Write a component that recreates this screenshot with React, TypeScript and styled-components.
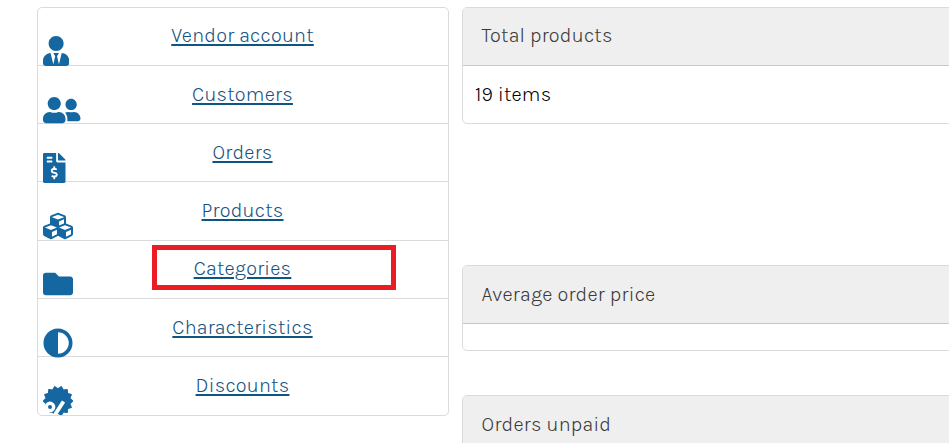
import React from "react";
import styled, { createGlobalStyle } from "styled-components";
import {
  FaUserTie,
  FaUserFriends,
  FaFileInvoiceDollar,
  FaCubes,
  FaFolder,
  FaAdjust,
} from "react-icons/fa";

const GlobalStyle = createGlobalStyle`
  * { box-sizing: border-box; }
  html, body { margin: 0; background: #fff; overflow: hidden; }
  body {
    font-family: Karla, Roboto, "Liberation Sans", sans-serif;
    font-size: 20px;
    font-weight: 360;
    letter-spacing: 0.25px;
  }
`;

const Page = styled.main`
  display: grid;
  grid-template-columns: 412px 520px;
  column-gap: 13px;
  align-items: start;
  width: 949px;
  height: 443px;
  padding: 7px 0 0 37px;
  overflow: hidden;
`;

const Menu = styled.nav`
  display: grid;
  grid-template-rows: 58px 58px 58px 59px 58px 58px 58px;
  height: 409px;
  border: 1px solid #dbdbdb;
  border-radius: 5px;
  overflow: hidden;
`;

const MenuRow = styled.div<{ $shift: number }>`
  display: grid;
  grid-template: 100% / 100%;
  padding-top: ${(p) => p.$shift}px;
  border-bottom: 1px solid #dbdbdb;
  &:last-child { border-bottom: 0; }
`;

const IconSlot = styled.span<{ $width: number }>`
  grid-area: 1 / 1;
  height: 30px;
  margin: 28px 0 0 5px;
  justify-self: start;
  color: #1467a1;
  z-index: 1;
  svg { display: block; height: 30px; width: ${(p) => p.$width}px; }
`;

const LabelSlot = styled.div`
  grid-area: 1 / 1;
  display: flex;
  justify-content: center;
  padding-top: 16px;
  padding-right: 1px;
  line-height: 24px;
`;

const MenuLink = styled.a`
  color: #16527f;
  text-decoration: underline;
  text-decoration-color: #0d5583;
  text-decoration-thickness: 2px;
  text-underline-offset: 2px;
`;

const Highlight = styled.div`
  position: absolute;
  left: 152px;
  top: 245px;
  width: 244px;
  height: 45px;
  border: 5px solid #ec1c24;
`;

const Stats = styled.section`
  display: flex;
  flex-direction: column;
`;

const Card = styled.article<{ $height: number; $gap: number }>`
  height: ${(p) => p.$height}px;
  margin-bottom: ${(p) => p.$gap}px;
  flex: none;
  border: 1px solid #dbdbdb;
  border-radius: 5px;
  overflow: hidden;
`;

const CardHead = styled.header<{ $shift?: number }>`
  height: 58px;
  padding: ${(p) => 16 + (p.$shift ?? 0)}px 0 0 18.6px;
  line-height: 24px;
  background: #efefef;
  border-bottom: 1px solid #c8c8c8;
  color: #3a3a3a;
`;

const CardBody = styled.div`
  padding: 17px 0 0 12px;
  line-height: 24px;
  color: #000;
`;

/* Serrated seal with a percent sign knocked out of it. */
function DiscountIcon() {
  const teeth = 14;
  const points = Array.from({ length: teeth * 2 }, (_, i) => {
    const r = i % 2 ? 14.6 : 12;
    const a = (Math.PI * i) / teeth - Math.PI / 2;
    return `${15 + r * Math.cos(a)},${15 + r * Math.sin(a)}`;
  }).join(" ");
  return (
    <svg viewBox="0 0 30 30">
      <polygon points={points} fill="currentColor" stroke="currentColor" strokeWidth="1.4" strokeLinejoin="round" />
      <circle cx="7" cy="21" r="3.7" fill="currentColor" stroke="#fff" strokeWidth="3.4" />
      <path d="M0 20 L2.5 20 L6 25 L8 30 H0Z" fill="#fff" />
      <path d="M20.5 15.5 L10.5 31" stroke="#fff" strokeWidth="3.8" />
    </svg>
  );
}

const items = [
  { label: "Vendor account", icon: <FaUserTie />, width: 26.25, shift: 0 },
  { label: "Customers", icon: <FaUserFriends />, width: 37.5, shift: 1 },
  { label: "Orders", icon: <FaFileInvoiceDollar />, width: 22.5, shift: 1 },
  { label: "Products", icon: <FaCubes />, width: 30, shift: 1 },
  { label: "Categories", icon: <FaFolder />, width: 30, shift: 0 },
  { label: "Characteristics", icon: <FaAdjust />, width: 30, shift: 1 },
  { label: "Discounts", icon: <DiscountIcon />, width: 30, shift: 1 },
];

export default function App() {
  return (
    <>
      <GlobalStyle />
      <Page>
        <Menu>
          {items.map((item) => (
            <MenuRow key={item.label} $shift={item.shift}>
              <IconSlot $width={item.width}>{item.icon}</IconSlot>
              <LabelSlot>
                <MenuLink href="#">{item.label}</MenuLink>
              </LabelSlot>
            </MenuRow>
          ))}
        </Menu>
        <Stats>
          <Card $height={117} $gap={141}>
            <CardHead>Total products</CardHead>
            <CardBody>19 items</CardBody>
          </Card>
          <Card $height={86} $gap={44}>
            <CardHead $shift={1}>Average order price</CardHead>
          </Card>
          <Card $height={117} $gap={0}>
            <CardHead $shift={1}>Orders unpaid</CardHead>
          </Card>
        </Stats>
        <Highlight />
      </Page>
    </>
  );
}
